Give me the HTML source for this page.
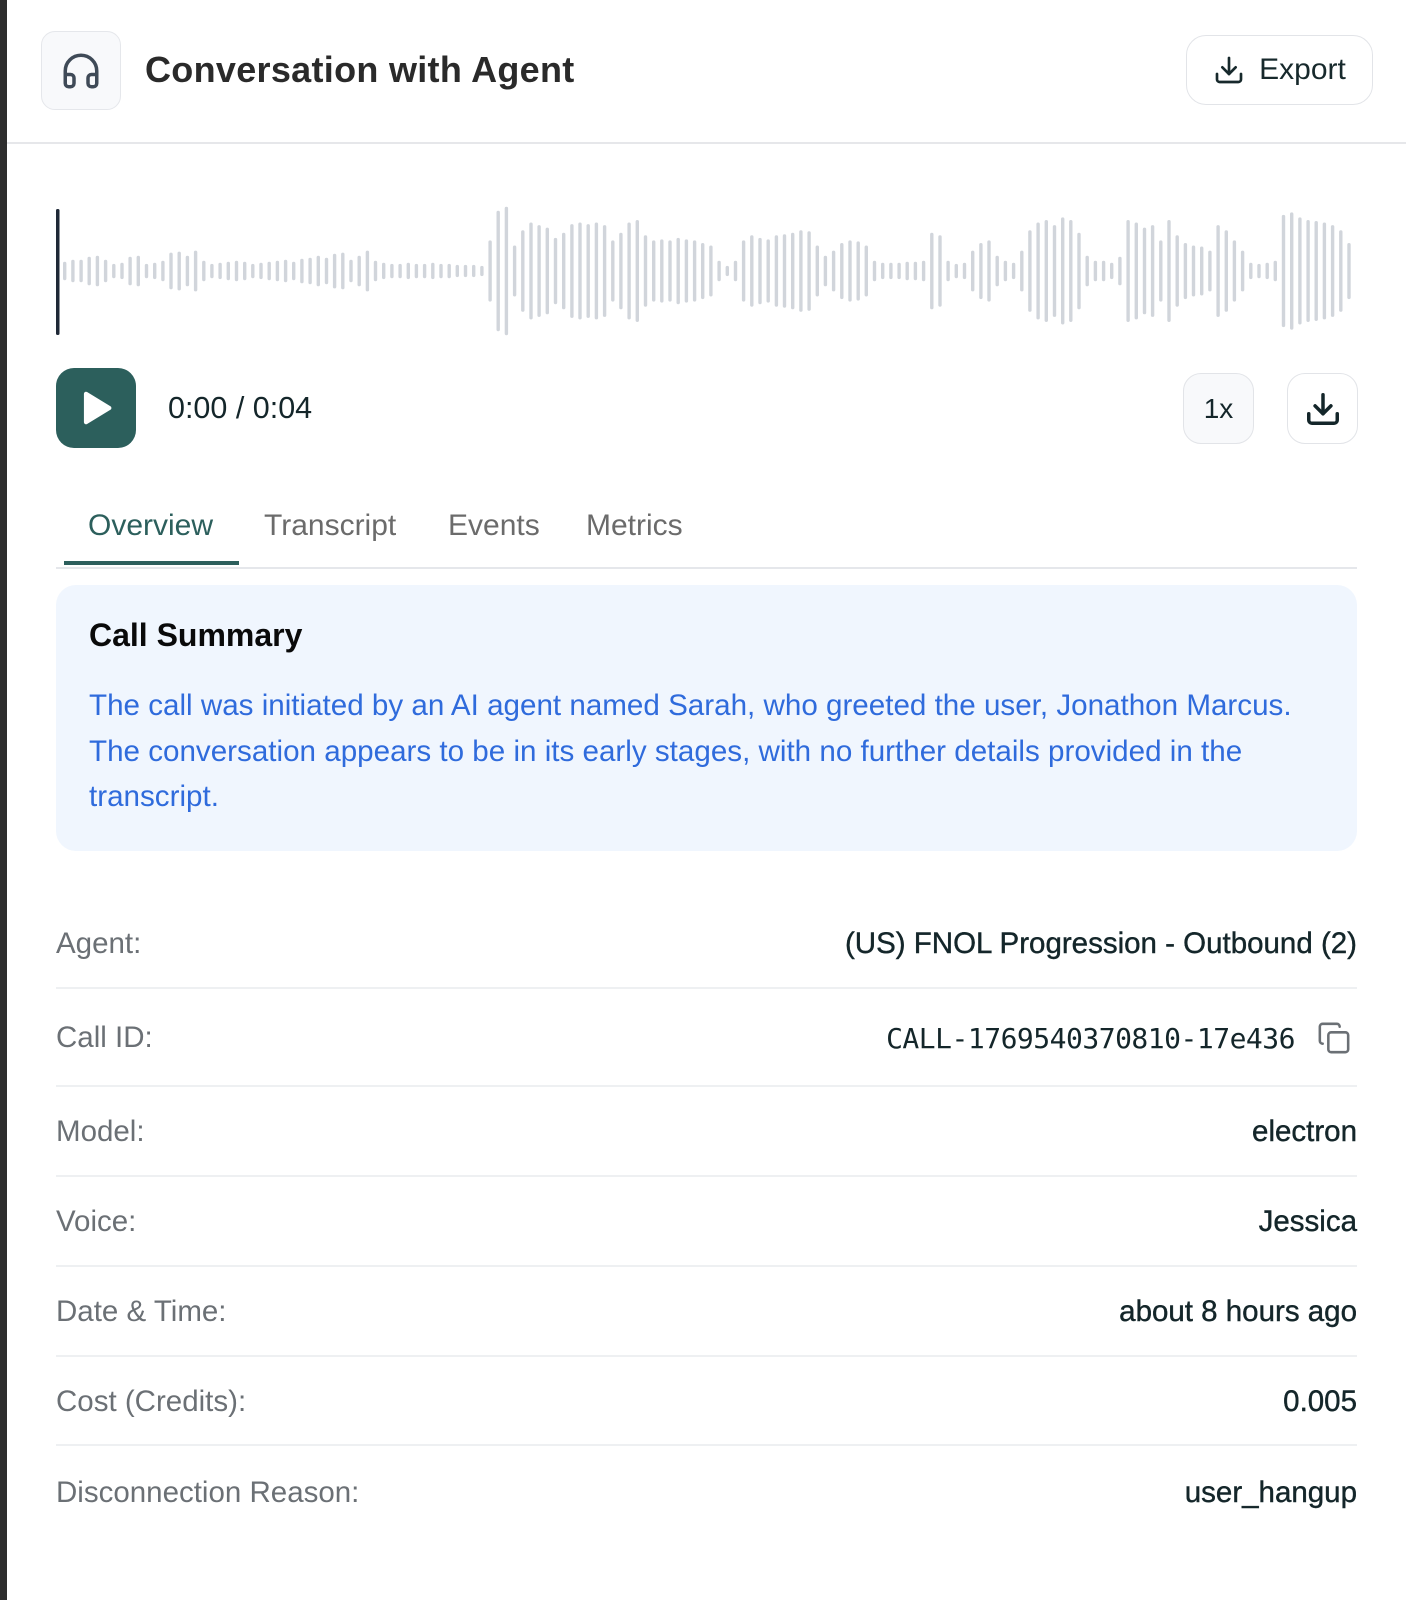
<!DOCTYPE html>
<html><head><meta charset="utf-8"><style>
*{box-sizing:border-box;margin:0;padding:0}
body{width:1406px;height:1600px;background:#fff;font-family:"Liberation Sans",sans-serif;position:relative;overflow:hidden;color:#1c2b2e}
.abs{position:absolute}
.lbar{left:0;top:0;width:7px;height:1600px;background:#2e2e2e}
.iconbox{left:41px;top:31px;width:80px;height:79px;border:1.5px solid #e5e7eb;border-radius:14px;background:#f8f9fb;display:flex;align-items:center;justify-content:center}
.title{left:145px;top:49px;font-size:36px;font-weight:700;color:#2a2a2a;letter-spacing:0.3px}
.export{left:1186px;top:35px;width:187px;height:70px;border:1.5px solid #e2e4e8;border-radius:20px;display:flex;align-items:center;justify-content:center;gap:14px;font-size:30px;color:#17292c}
.hr{left:7px;top:142px;width:1399px;height:2px;background:#e6e7ea}
.play{left:56px;top:368px;width:80px;height:80px;border-radius:18px;background:#2c5f5c;display:flex;align-items:center;justify-content:center}
.time{left:168px;top:391px;font-size:30.5px;color:#14262a}
.btn{top:373px;width:71px;height:71px;border:1.5px solid #e2e4e8;border-radius:18px;display:flex;align-items:center;justify-content:center}
.tab{top:509px;font-size:30px;color:#6b6b6b}
.sum{left:56px;top:585px;width:1301px;height:266px;background:#f0f6fe;border-radius:20px}
.sum h3{position:absolute;left:33px;top:32px;font-size:32px;font-weight:700;color:#0a0a0a}
.sum p{position:absolute;left:33px;top:98px;font-size:29.6px;line-height:45.5px;color:#2f6bdc;white-space:nowrap}
.row{left:56px;width:1301px;height:40px;display:flex;justify-content:space-between;align-items:center;font-size:29.5px}
.row .l{color:#6b7075}
.row .v{color:#14262a;-webkit-text-stroke:0.4px #14262a}
.sep{left:56px;width:1301px;height:2px;background:#eef0f2}
</style></head><body>
<div class="abs lbar"></div>
<div class="abs iconbox"><svg width="42" height="42" viewBox="0 0 24 24" fill="none" stroke="#3f4a57" stroke-width="2" stroke-linecap="round" stroke-linejoin="round"><path d="M3 14h3a2 2 0 0 1 2 2v3a2 2 0 0 1-2 2H5a2 2 0 0 1-2-2v-7a9 9 0 0 1 18 0v7a2 2 0 0 1-2 2h-1a2 2 0 0 1-2-2v-3a2 2 0 0 1 2-2h3"/></svg></div>
<div class="abs title">Conversation with Agent</div>
<div class="abs export"><svg width="32" height="32" viewBox="0 0 24 24" fill="none" stroke="#17292c" stroke-width="2" stroke-linecap="round" stroke-linejoin="round"><path d="M21 15v4a2 2 0 0 1-2 2H5a2 2 0 0 1-2-2v-4"/><path d="M7 10l5 5 5-5"/><path d="M12 15V3"/></svg><span>Export</span></div>
<div class="abs hr"></div>
<svg class="abs" style="left:0;top:200px" width="1406" height="145" id="wf"></svg>
<div class="abs play"><svg width="40" height="40" viewBox="0 0 24 24"><path d="M6 3.5 L20 12 L6 20.5 Z" fill="#fff" stroke="#fff" stroke-width="2.5" stroke-linejoin="round"/></svg></div>
<div class="abs time">0:00 / 0:04</div>
<div class="abs btn" style="left:1183px;background:#f8f9fb;font-size:28px;color:#14262a">1x</div>
<div class="abs btn" style="left:1287px"><svg width="38" height="38" viewBox="0 0 24 24" fill="none" stroke="#14262a" stroke-width="2.2" stroke-linecap="round" stroke-linejoin="round"><path d="M21 15v4a2 2 0 0 1-2 2H5a2 2 0 0 1-2-2v-4"/><path d="M7 10l5 5 5-5"/><path d="M12 15V3"/></svg></div>
<div class="abs tab" style="left:88px;color:#2c5f5c">Overview</div>
<div class="abs tab" style="left:264px">Transcript</div>
<div class="abs tab" style="left:448px">Events</div>
<div class="abs tab" style="left:586px">Metrics</div>
<div class="abs" style="left:56px;top:567px;width:1301px;height:2px;background:#e5e7eb"></div>
<div class="abs" style="left:64px;top:561px;width:175px;height:4px;background:#2c5f5c"></div>
<div class="abs sum"><h3>Call Summary</h3><p>The call was initiated by an AI agent named Sarah, who greeted the user, Jonathon Marcus.<br>The conversation appears to be in its early stages, with no further details provided in the<br>transcript.</p></div>

<div class="abs row" style="top:924px"><span class="l">Agent:</span><span class="v">(US) FNOL Progression - Outbound (2)</span></div>
<div class="abs sep" style="top:987px"></div>
<div class="abs row" style="top:1018px"><span class="l">Call ID:</span><span style="display:flex;align-items:center;gap:22px;margin-right:6px"><span style="font-family:'DejaVu Sans Mono','Liberation Mono',monospace;font-size:28px;color:#14262a;letter-spacing:-0.5px">CALL-1769540370810-17e436</span><svg width="34" height="34" viewBox="0 0 24 24" fill="none" stroke="#6b7075" stroke-width="1.8" stroke-linecap="round" stroke-linejoin="round"><rect x="8" y="8" width="14" height="14" rx="2"/><path d="M4 16c-1.1 0-2-.9-2-2V4c0-1.1.9-2 2-2h10c1.1 0 2 .9 2 2"/></svg></span></div>
<div class="abs sep" style="top:1085px"></div>
<div class="abs row" style="top:1112px"><span class="l">Model:</span><span class="v">electron</span></div>
<div class="abs sep" style="top:1175px"></div>
<div class="abs row" style="top:1202px"><span class="l">Voice:</span><span class="v">Jessica</span></div>
<div class="abs sep" style="top:1265px"></div>
<div class="abs row" style="top:1292px"><span class="l">Date &amp; Time:</span><span class="v">about 8 hours ago</span></div>
<div class="abs sep" style="top:1355px"></div>
<div class="abs row" style="top:1382px"><span class="l">Cost (Credits):</span><span class="v">0.005</span></div>
<div class="abs sep" style="top:1444px"></div>
<div class="abs row" style="top:1473px"><span class="l">Disconnection Reason:</span><span class="v">user_hangup</span></div>

<script>
var h=[18,22,22,28,30,22,14,16,28,30,14,16,20,36,38,30,40,20,14,16,18,20,18,14,16,18,20,22,18,24,26,30,26,34,36,22,30,40,20,16,14,14,16,14,14,16,14,14,12,12,12,10,
60,118,126,50,80,95,90,85,65,75,92,95,92,95,90,60,75,95,
100,70,60,62,60,65,62,60,55,50,20,10,20,
60,70,65,62,70,72,75,80,78,50,
30,40,55,60,58,50,20,16,
16,16,18,18,20,75,
70,20,14,16,
40,55,60,30,20,16,
40,80,95,100,90,105,100,75,30,20,
20,16,28,
100,95,85,90,60,100,70,
55,50,48,40,90,80,60,
40,16,14,16,20,110,
115,105,100,98,95,90,80,55];
var s='<rect x="56" y="9" width="3.5" height="126" rx="1.5" fill="#1f2937"/>';
for(var i=0;i<h.length;i++){var hh=h[i]*1.02;var x=63+i*8.18;s+='<rect x="'+x.toFixed(1)+'" y="'+(71-hh/2).toFixed(1)+'" width="3.4" height="'+hh.toFixed(1)+'" rx="1.7" fill="#d1d5db"/>';}
document.getElementById('wf').innerHTML=s;
</script>
</body></html>
